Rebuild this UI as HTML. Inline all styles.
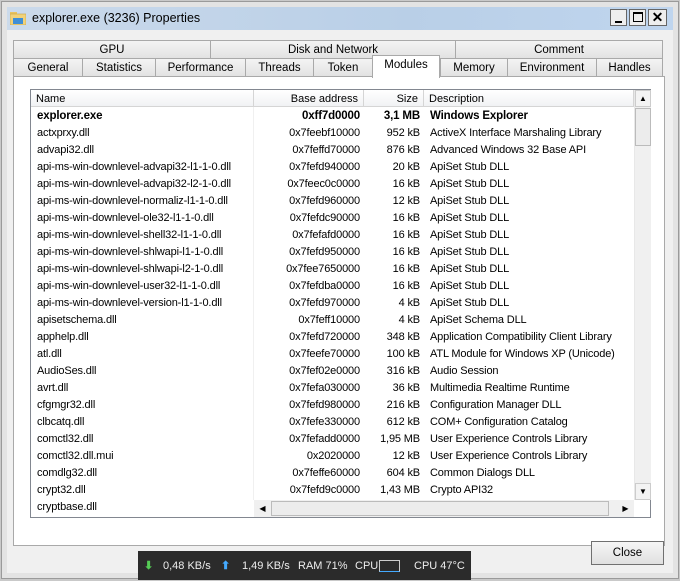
<!DOCTYPE html><html><head><style>
*{margin:0;padding:0;box-sizing:border-box}
body{width:680px;height:580px;background:#c9c9c9;font-family:"Liberation Sans",sans-serif;font-size:11px;color:#000;position:relative;overflow:hidden}
.abs{position:absolute}
.frame{left:1px;top:1px;width:678px;height:578px;background:#e3e3e3;border:1px solid #9a9a9a}
.title{left:7px;top:7px;width:666px;height:23px;background:linear-gradient(90deg,#cbdaeb,#b9cfe7 60%,#bfd5ee);}
.title span{position:absolute;left:25px;top:4px;font-size:12.5px}
.client{left:7px;top:30px;width:666px;height:543px;background:#f0f0f0}
.tab{position:absolute;height:18px;border:1px solid #a9a9a9;border-bottom:none;background:linear-gradient(#f4f4f4,#e2e2e2);text-align:center;line-height:18px;font-size:11.5px}
.panel{left:13px;top:76px;width:652px;height:470px;background:#fff;border:1px solid #a9a9a9}
.list{left:30px;top:89px;width:621px;height:429px;border:1px solid #828790;background:#fff}
.hdr{position:absolute;top:0;height:17px;border-right:1px solid #d5d5d5;border-bottom:1px solid #d5d5d5;background:linear-gradient(#fff,#f1f2f4);line-height:18px;padding:0 5px;font-size:11px}
.row{position:absolute;left:0;height:17px;line-height:17px;width:603px;font-size:11px;letter-spacing:-0.15px}
.row span{position:absolute;white-space:nowrap}
.c1{left:6px}.c4{left:398px}
.btn{position:absolute;background:linear-gradient(#f2f2f2,#dcdcdc);border:1px solid #707070}
</style></head><body>
<div class="abs frame"></div>
<div class="abs title"><svg class="abs" style="left:3px;top:4px" width="16" height="14"><rect x="0" y="1" width="7" height="3" fill="#e8c360"/><rect x="0" y="3" width="16" height="11" fill="#f1d27a" stroke="#c9a240" stroke-width=".6"/><rect x="3" y="7" width="10" height="6" fill="#3f8fd6"/></svg><span>explorer.exe (3236) Properties</span></div>
<div class="btn" style="left:610px;top:9px;width:17px;height:17px;background:#eee;border-color:#666"><div class="abs" style="left:4px;top:11px;width:7px;height:2px;background:#000"></div></div>
<div class="btn" style="left:629px;top:9px;width:17px;height:17px;background:#eee;border-color:#666"><div class="abs" style="left:3px;top:2px;width:10px;height:10px;border:1px solid #000;border-top-width:2px"></div></div>
<div class="btn" style="left:648px;top:9px;width:19px;height:17px;background:#eee;border-color:#666;font-size:14px;line-height:15px;text-align:center;font-weight:bold">✕</div>
<div class="abs client"></div>
<div class="tab" style="left:13px;top:40px;width:198px">GPU</div>
<div class="tab" style="left:210px;top:40px;width:246px">Disk and Network</div>
<div class="tab" style="left:455px;top:40px;width:208px">Comment</div>
<div class="tab" style="left:13px;top:58px;width:70px">General</div>
<div class="tab" style="left:82px;top:58px;width:74px">Statistics</div>
<div class="tab" style="left:155px;top:58px;width:91px">Performance</div>
<div class="tab" style="left:245px;top:58px;width:69px">Threads</div>
<div class="tab" style="left:313px;top:58px;width:60px">Token</div>
<div class="tab" style="left:440px;top:58px;width:68px">Memory</div>
<div class="tab" style="left:507px;top:58px;width:90px">Environment</div>
<div class="tab" style="left:596px;top:58px;width:67px">Handles</div>
<div class="abs panel"></div>
<div class="tab" style="left:372px;top:55px;width:68px;height:23px;background:#fff;line-height:18px">Modules</div>
<div class="abs list">
<div class="hdr" style="left:0;width:223px">Name</div>
<div class="hdr" style="left:223px;width:110px;text-align:right">Base address</div>
<div class="hdr" style="left:333px;width:60px;text-align:right">Size</div>
<div class="hdr" style="left:393px;width:210px">Description</div>
<div class="abs" style="left:222px;top:17px;width:1px;height:393px;background:#f0f0f0"></div>
<div class="abs" style="left:603px;top:0;width:17px;height:410px;background:#f0f0f0;border-left:1px solid #e8e8e8"></div>
<div class="abs" style="left:604px;top:0;width:16px;height:17px;background:#f3f3f3;border:1px solid #ccc;text-align:center;font-size:8px;line-height:15px">▲</div>
<div class="abs" style="left:604px;top:18px;width:16px;height:38px;background:#ececec;border:1px solid #bbb"></div>
<div class="abs" style="left:604px;top:393px;width:16px;height:17px;background:#f3f3f3;border:1px solid #ccc;text-align:center;font-size:8px;line-height:15px">▼</div>
<div class="abs" style="left:223px;top:410px;width:380px;height:17px;background:#f0f0f0"></div>
<div class="abs" style="left:223px;top:410px;width:17px;height:17px;font-size:8px;line-height:17px;text-align:center">◀</div>
<div class="abs" style="left:240px;top:411px;width:338px;height:15px;background:#ececec;border:1px solid #bbb"></div>
<div class="abs" style="left:586px;top:410px;width:17px;height:17px;font-size:8px;line-height:17px;text-align:center">▶</div>
</div>
<div id="r" class="abs" style="left:31px;top:108px"></div>
<div class="btn" style="left:591px;top:541px;width:73px;height:24px;text-align:center;line-height:22px;font-size:11.5px;background:linear-gradient(#f6f6f6,#e0e0e0)">Close</div>
<div class="abs" style="left:138px;top:551px;width:333px;height:29px;background:#2b2b2b;color:#eee;font-size:11px;line-height:30px">
<span class="abs" style="left:6px;color:#5c5;font-weight:bold">⬇</span><span class="abs" style="left:25px">0,48 KB/s</span>
<span class="abs" style="left:83px;color:#4af;font-weight:bold">⬆</span><span class="abs" style="left:104px">1,49 KB/s</span>
<span class="abs" style="left:160px">RAM 71%</span><span class="abs" style="left:217px">CPU</span>
<div class="abs" style="left:241px;top:9px;width:21px;height:12px;border:1px solid #ccc;border-bottom-color:#4af"></div>
<span class="abs" style="left:276px">CPU 47°C</span></div>
<script>
var d=[["explorer.exe","0xff7d0000","3,1 MB","Windows Explorer"],["actxprxy.dll","0x7feebf10000","952 kB","ActiveX Interface Marshaling Library"],["advapi32.dll","0x7feffd70000","876 kB","Advanced Windows 32 Base API"],["api-ms-win-downlevel-advapi32-l1-1-0.dll","0x7fefd940000","20 kB","ApiSet Stub DLL"],["api-ms-win-downlevel-advapi32-l2-1-0.dll","0x7feec0c0000","16 kB","ApiSet Stub DLL"],["api-ms-win-downlevel-normaliz-l1-1-0.dll","0x7fefd960000","12 kB","ApiSet Stub DLL"],["api-ms-win-downlevel-ole32-l1-1-0.dll","0x7fefdc90000","16 kB","ApiSet Stub DLL"],["api-ms-win-downlevel-shell32-l1-1-0.dll","0x7fefafd0000","16 kB","ApiSet Stub DLL"],["api-ms-win-downlevel-shlwapi-l1-1-0.dll","0x7fefd950000","16 kB","ApiSet Stub DLL"],["api-ms-win-downlevel-shlwapi-l2-1-0.dll","0x7fee7650000","16 kB","ApiSet Stub DLL"],["api-ms-win-downlevel-user32-l1-1-0.dll","0x7fefdba0000","16 kB","ApiSet Stub DLL"],["api-ms-win-downlevel-version-l1-1-0.dll","0x7fefd970000","4 kB","ApiSet Stub DLL"],["apisetschema.dll","0x7feff10000","4 kB","ApiSet Schema DLL"],["apphelp.dll","0x7fefd720000","348 kB","Application Compatibility Client Library"],["atl.dll","0x7feefe70000","100 kB","ATL Module for Windows XP (Unicode)"],["AudioSes.dll","0x7fef02e0000","316 kB","Audio Session"],["avrt.dll","0x7fefa030000","36 kB","Multimedia Realtime Runtime"],["cfgmgr32.dll","0x7fefd980000","216 kB","Configuration Manager DLL"],["clbcatq.dll","0x7fefe330000","612 kB","COM+ Configuration Catalog"],["comctl32.dll","0x7fefadd0000","1,95 MB","User Experience Controls Library"],["comctl32.dll.mui","0x2020000","12 kB","User Experience Controls Library"],["comdlg32.dll","0x7feffe60000","604 kB","Common Dialogs DLL"],["crypt32.dll","0x7fefd9c0000","1,43 MB","Crypto API32"],["cryptbase.dll","","",""]];
var h="";d.forEach(function(r,i){h+='<div class="row" style="top:'+(i*17)+'px;'+(i==0?'font-weight:bold;font-size:11.5px':'')+'"><span class="c1">'+r[0]+'</span><span style="right:274px">'+r[1]+'</span><span style="right:214px">'+r[2]+'</span><span class="c4" style="left:399px">'+r[3]+'</span></div>'});
document.getElementById('r').innerHTML=h;
</script>
</body></html>
